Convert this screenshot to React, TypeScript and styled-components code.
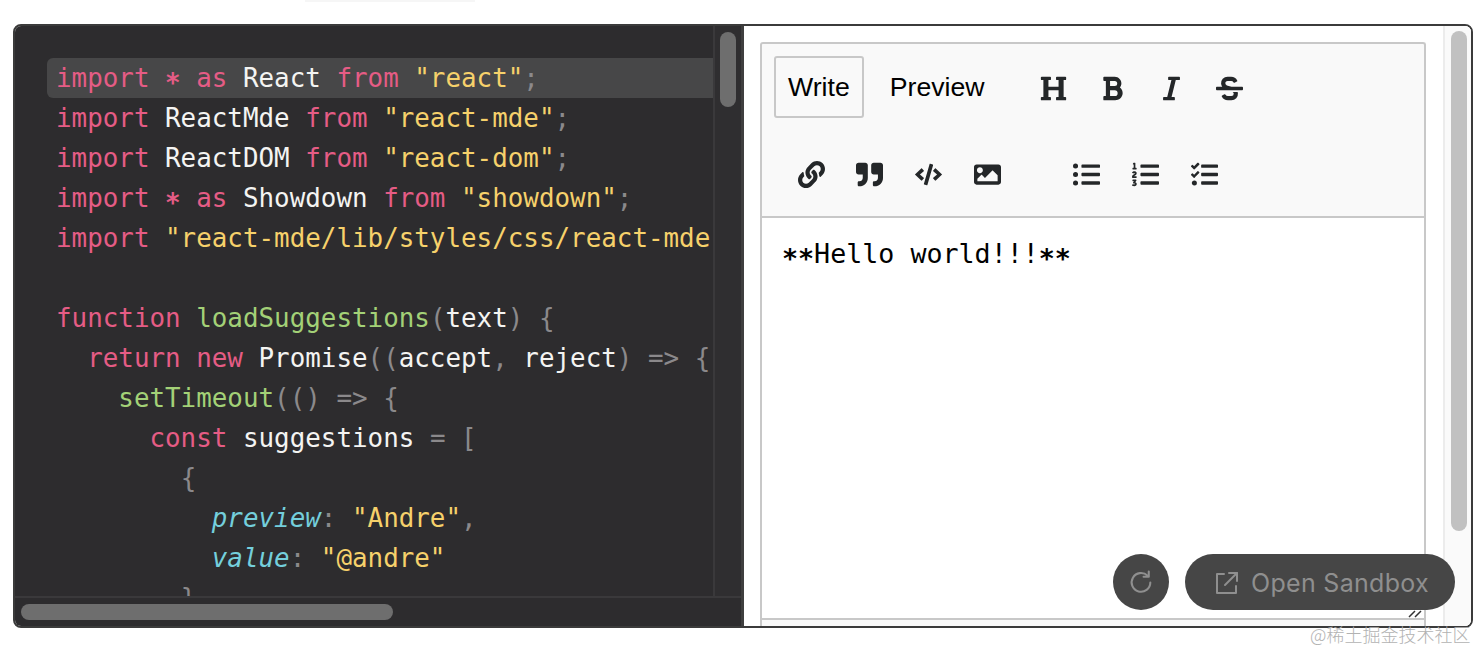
import { ReactElement, ReactNode } from "react";
import styled, { createGlobalStyle } from "styled-components";
import {
    FaBold,
    FaCode,
    FaHeading,
    FaImage,
    FaItalic,
    FaLink,
    FaListOl,
    FaListUl,
    FaQuoteRight,
    FaStrikethrough,
    FaTasks,
} from "react-icons/fa";

const GlobalStyle = createGlobalStyle`
    html, body {
        margin: 0;
        background: #fff;
    }
    * {
        box-sizing: border-box;
    }
`;

const Page = styled.div`
    position: relative;
    width: 1476px;
    height: 650px;
    overflow: hidden;
`;

const TopTab = styled.div`
    width: 170px;
    height: 2px;
    margin: 0 0 22px 305px;
    background: #f6f6f6;
`;

const Frame = styled.div`
    position: relative;
    display: flex;
    width: 1460px;
    height: 604px;
    margin-left: 13px;
    border: 2px solid #3b3b3b;
    border-radius: 8px;
    overflow: hidden;
`;

const CodePane = styled.div`
    display: flex;
    flex-direction: column;
    width: 729px;
    border-right: 3px solid #3f3f3f;
    background: #2d2c2e;
`;

const CodeRow = styled.div`
    display: flex;
    height: 572px;
    border-bottom: 2px solid #3a393b;
`;

const CodeView = styled.div`
    width: 698px;
    padding-top: 32px;
    overflow: hidden;
`;

const Line = styled.div<{ $active?: boolean }>`
    width: 666px;
    height: 40px;
    margin-left: 32px;
    padding-left: 9px;
    border-radius: 6px 0 0 6px;
    background: ${(p) => (p.$active ? "#474748" : "transparent")};
    color: #f4f4f2;
    font-family: "DejaVu Sans Mono", monospace;
    font-size: 25.88px;
    line-height: 40px;
    white-space: pre;
    overflow: hidden;
`;

const Keyword = styled.span`
    color: #e55c85;
`;

const Str = styled.span`
    color: #f6d16b;
`;

const Fn = styled.span`
    color: #a3d177;
`;

const Prop = styled.span`
    color: #74cfdc;
    font-style: italic;
`;

const Punct = styled.span`
    color: #8b898b;
`;

const Star = styled.span`
    font-weight: 700;
    vertical-align: -0.2em;
`;

const DarkTrackY = styled.div`
    width: 28px;
    padding: 6px 0 0 5px;
    border-left: 2px solid #3a393b;
    background: #2f2e30;
`;

const DarkThumbY = styled.div`
    width: 16px;
    height: 75px;
    border-radius: 8px;
    background: #6e6e6e;
`;

const DarkTrackX = styled.div`
    flex: 1;
    padding: 6px 0 0 6px;
`;

const DarkThumbX = styled.div`
    width: 372px;
    height: 16px;
    border-radius: 8px;
    background: #6e6e6e;
`;

const EditorPane = styled.div`
    display: flex;
    flex: 1;
    background: #fff;
`;

const EditorWrap = styled.div`
    flex: 1;
    padding: 16px 17px 0 16px;
`;

const Editor = styled.div`
    height: 100%;
    border: 2px solid #c8c8c8;
    border-bottom: 0;
    border-radius: 3px 3px 0 0;
    background: #f9f9f9;
`;

const Toolbar = styled.div`
    display: flex;
    flex-direction: column;
    gap: 24px;
    height: 174px;
    padding: 12px;
    border-bottom: 2px solid #c8c8c8;
`;

const ToolRow = styled.div<{ $indent?: number }>`
    display: flex;
    align-items: center;
    height: 62px;
    padding-left: ${(p) => p.$indent ?? 0}px;
`;

const Tab = styled.div<{ $selected?: boolean }>`
    height: 62px;
    margin-right: 12px;
    padding: 0 12px;
    border: 2px solid ${(p) => (p.$selected ? "#c8c8c8" : "transparent")};
    border-radius: 3px;
    color: #000;
    font-family: "Liberation Sans", Arial, sans-serif;
    font-size: 26.67px;
    line-height: 58px;
`;

const ToolGroup = styled.div<{ $gap?: number }>`
    display: flex;
    margin-left: ${(p) => p.$gap ?? 0}px;
`;

const ToolButton = styled.div`
    display: flex;
    align-items: center;
    justify-content: center;
    width: 58.67px;
    height: 40px;
    padding-top: 2px;
    color: #242729;
    font-size: 27px;
`;

const TextArea = styled.div`
    height: 402px;
    padding: 20px;
    border-bottom: 2px solid #c8c8c8;
    background: #fff;
    color: #000;
    font-family: "DejaVu Sans Mono", monospace;
    font-size: 26.67px;
    white-space: pre;
`;

const LightTrack = styled.div`
    width: 28px;
    padding: 5px 0 0 6px;
    border-left: 2px solid #ececec;
    background: #fafafa;
`;

const LightThumb = styled.div`
    width: 16px;
    height: 500px;
    border-radius: 8px;
    background: #c1c1c1;
`;

const Actions = styled.div`
    position: absolute;
    top: 528px;
    right: 16px;
    display: flex;
    gap: 16px;
`;

const RoundButton = styled.div`
    display: flex;
    align-items: center;
    justify-content: center;
    width: 56px;
    height: 56px;
    border-radius: 50%;
    background: #464646;
`;

const PillButton = styled.div`
    display: flex;
    align-items: center;
    gap: 11px;
    height: 56px;
    padding: 2px 26px 0 29px;
    border-radius: 28px;
    background: #464646;
    color: #8f8f8f;
    font-family: Inter, "Liberation Sans", sans-serif;
    font-size: 25px;
    letter-spacing: 0.3px;
`;

const Grip = styled.svg`
    position: absolute;
    right: 48px;
    bottom: 8px;
`;

const Watermark = styled.div`
    position: absolute;
    top: 622px;
    left: 1310px;
    color: #b2b2b2;
    font-family: "Noto Sans CJK SC", sans-serif;
    font-size: 18px;
    font-weight: 300;
    line-height: 24px;
    white-space: nowrap;
`;

const codeLines: Array<ReactNode> = [
    <><Keyword>import</Keyword> <Keyword><Star>*</Star></Keyword> <Keyword>as</Keyword> React <Keyword>from</Keyword> <Str>"react"</Str><Punct>;</Punct></>,
    <><Keyword>import</Keyword> ReactMde <Keyword>from</Keyword> <Str>"react-mde"</Str><Punct>;</Punct></>,
    <><Keyword>import</Keyword> ReactDOM <Keyword>from</Keyword> <Str>"react-dom"</Str><Punct>;</Punct></>,
    <><Keyword>import</Keyword> <Keyword><Star>*</Star></Keyword> <Keyword>as</Keyword> Showdown <Keyword>from</Keyword> <Str>"showdown"</Str><Punct>;</Punct></>,
    <><Keyword>import</Keyword> <Str>"react-mde/lib/styles/css/react-mde-all.css"</Str><Punct>;</Punct></>,
    " ",
    <><Keyword>function</Keyword> <Fn>loadSuggestions</Fn><Punct>(</Punct>text<Punct>) {"{"}</Punct></>,
    <>  <Keyword>return</Keyword> <Keyword>new</Keyword> Promise<Punct>((</Punct>accept<Punct>,</Punct> reject<Punct>) =&gt; {"{"}</Punct></>,
    <>    <Fn>setTimeout</Fn><Punct>(() =&gt; {"{"}</Punct></>,
    <>      <Keyword>const</Keyword> suggestions <Punct>= [</Punct></>,
    <>        <Punct>{"{"}</Punct></>,
    <>          <Prop>preview</Prop><Punct>:</Punct> <Str>"Andre"</Str><Punct>,</Punct></>,
    <>          <Prop>value</Prop><Punct>:</Punct> <Str>"@andre"</Str></>,
    <>        <Punct>{"},"}</Punct></>,
];

const headerTools: Array<ReactElement> = [
    <FaHeading key="heading" />,
    <FaBold key="bold" />,
    <FaItalic key="italic" />,
    <FaStrikethrough key="strike" />,
];

const insertTools: Array<ReactElement> = [
    <FaLink key="link" />,
    <FaQuoteRight key="quote" />,
    <FaCode key="code" />,
    <FaImage key="image" />,
];

const listTools: Array<ReactElement> = [
    <FaListUl key="ul" />,
    <FaListOl key="ol" />,
    <FaTasks key="tasks" />,
];

export default function App(): ReactElement {
    return (
        <Page>
            <GlobalStyle />
            <TopTab />
            <Frame>
                <CodePane>
                    <CodeRow>
                        <CodeView>
                            {codeLines.map((line, index) => (
                                <Line key={index} $active={index === 0}>{line}</Line>
                            ))}
                        </CodeView>
                        <DarkTrackY>
                            <DarkThumbY />
                        </DarkTrackY>
                    </CodeRow>
                    <DarkTrackX>
                        <DarkThumbX />
                    </DarkTrackX>
                </CodePane>
                <EditorPane>
                    <EditorWrap>
                        <Editor>
                            <Toolbar>
                                <ToolRow>
                                    <Tab $selected>Write</Tab>
                                    <Tab>Preview</Tab>
                                    <ToolGroup $gap={14}>
                                        {headerTools.map((icon) => <ToolButton key={icon.key}>{icon}</ToolButton>)}
                                    </ToolGroup>
                                </ToolRow>
                                <ToolRow $indent={8}>
                                    <ToolGroup>
                                        {insertTools.map((icon) => <ToolButton key={icon.key}>{icon}</ToolButton>)}
                                    </ToolGroup>
                                    <ToolGroup $gap={41}>
                                        {listTools.map((icon) => <ToolButton key={icon.key}>{icon}</ToolButton>)}
                                    </ToolGroup>
                                </ToolRow>
                            </Toolbar>
                            <TextArea><Star>**</Star>Hello world!!!<Star>**</Star></TextArea>
                        </Editor>
                    </EditorWrap>
                    <LightTrack>
                        <LightThumb />
                    </LightTrack>
                </EditorPane>
                <Grip width="16" height="12" viewBox="0 0 16 12" fill="none" stroke="#333" strokeWidth="1.5">
                    <path d="M2 11 L8 5 M8 11 L14 5" />
                </Grip>
                <Actions>
                    <RoundButton>
                        <svg width="27" height="27" viewBox="0 0 26 26" fill="none" stroke="#8f8f8f" strokeWidth="2" strokeLinecap="round" strokeLinejoin="round">
                            <path d="M21.5 13a9 9 0 1 1-2.6-6.4" />
                            <path d="M20 2.5v5h-5" />
                        </svg>
                    </RoundButton>
                    <PillButton>
                        <svg width="26" height="26" viewBox="0 0 26 26" fill="none" stroke="#8f8f8f" strokeWidth="2" strokeLinecap="round" strokeLinejoin="round">
                            <path d="M10 4H3v19h19v-7" />
                            <path d="M11 15L23 3" />
                            <path d="M15 3h8v8" />
                        </svg>
                        Open Sandbox
                    </PillButton>
                </Actions>
            </Frame>
            <Watermark>@稀土掘金技术社区</Watermark>
        </Page>
    );
}
